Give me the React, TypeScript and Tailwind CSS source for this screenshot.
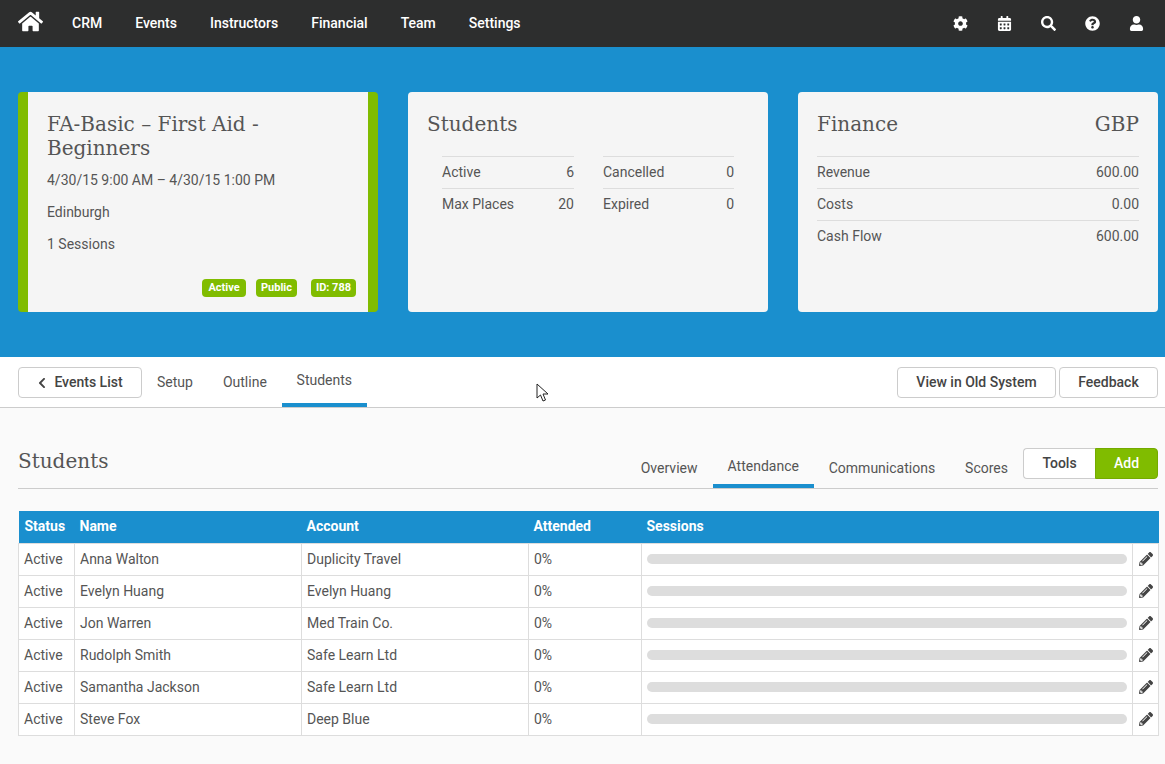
import { FaHome, FaCog, FaCalendarAlt, FaSearch, FaQuestionCircle, FaUser, FaChevronLeft, FaPencilAlt } from 'react-icons/fa'

const NAV = ['CRM', 'Events', 'Instructors', 'Financial', 'Team', 'Settings']

const STUDENTS = [
  ['Anna Walton', 'Duplicity Travel'],
  ['Evelyn Huang', 'Evelyn Huang'],
  ['Jon Warren', 'Med Train Co.'],
  ['Rudolph Smith', 'Safe Learn Ltd'],
  ['Samantha Jackson', 'Safe Learn Ltd'],
  ['Steve Fox', 'Deep Blue'],
]

function StatRow({ label, value }: { label: string; value: string }) {
  return (
    <div className="flex justify-between h-8 items-center border-t border-[#dddddd]">
      <span>{label}</span>
      <span>{value}</span>
    </div>
  )
}

function Badge({ children, className }: { children: string; className: string }) {
  return (
    <span className={`h-[18px] flex items-center justify-center rounded-sm bg-[#80bc00] text-white text-[11px] font-bold ${className}`}>
      {children}
    </span>
  )
}

export default function App() {
  return (
    <div className="min-h-screen bg-[#fafafa] text-[14px] text-[#555555] font-['Roboto',sans-serif] relative">
      {/* Top nav */}
      <header className="h-[47px] bg-[#2d2e2e] flex items-center text-white pl-[18px]">
        <FaHome className="w-[25px] h-[25px] mr-[29px] -mt-1" />
        <nav className="flex gap-[33px] font-medium">
          {NAV.map((n) => (
            <span key={n}>{n}</span>
          ))}
        </nav>
        <div className="ml-auto flex items-center text-[14px]">
          {[FaCog, FaCalendarAlt, FaSearch, FaQuestionCircle, FaUser].map((Icon, i) => (
            <span key={i} className="w-11 flex justify-center">
              <Icon className="w-[15px] h-[15px]" />
            </span>
          ))}
          <span className="w-[7px]" />
        </div>
      </header>

      {/* Summary cards */}
      <section className="h-[310px] bg-[#1a8fce] pt-[45px] pl-[18px] pr-[7px] grid grid-cols-[360px_360px_360px] gap-[30px]">
        <div className="h-[220px] bg-[#f5f5f5] rounded border-x-10 border-[#80bc00] pl-[19px] pr-[12px] pt-5 relative">
          <h2 className="font-['DejaVu_Serif',serif] font-extralight text-[20px] leading-6 text-[#555555]">
            FA-Basic – First Aid - Beginners
          </h2>
          <p className="mt-[10px] leading-5">4/30/15 9:00 AM – 4/30/15 1:00 PM</p>
          <p className="mt-3 leading-5">Edinburgh</p>
          <p className="mt-3 leading-5">1 Sessions</p>
          <div className="absolute right-3 bottom-[15px] flex">
            <Badge className="w-11 mr-[10px]">Active</Badge>
            <Badge className="w-[41px] mr-[14px]">Public</Badge>
            <Badge className="w-[45px]">ID: 788</Badge>
          </div>
        </div>

        <div className="h-[220px] bg-[#f5f5f5] rounded px-[19px] pt-5">
          <h2 className="font-['DejaVu_Serif',serif] text-[20px] leading-6">Students</h2>
          <div className="mt-5 ml-[15px] mr-[15px] flex gap-[29px]">
            <div className="w-[132px]">
              <StatRow label="Active" value="6" />
              <StatRow label="Max Places" value="20" />
            </div>
            <div className="w-[131px]">
              <StatRow label="Cancelled" value="0" />
              <StatRow label="Expired" value="0" />
            </div>
          </div>
        </div>

        <div className="h-[220px] bg-[#f5f5f5] rounded px-[19px] pt-5">
          <h2 className="font-['DejaVu_Serif',serif] text-[20px] leading-6 flex justify-between">
            <span>Finance</span>
            <span>GBP</span>
          </h2>
          <div className="mt-5">
            <StatRow label="Revenue" value="600.00" />
            <StatRow label="Costs" value="0.00" />
            <StatRow label="Cash Flow" value="600.00" />
          </div>
        </div>
      </section>

      {/* Sub nav */}
      <div className="h-[51px] bg-white border-b border-[#cccccc] flex pl-[18px] pr-[7px]">
        <button className="mt-[10px] h-[31px] w-[124px] border border-[#cccccc] rounded flex items-center justify-center gap-[7px] font-medium text-[#444444]">
          <FaChevronLeft className="w-[10px] h-[12px]" />
          Events List
        </button>
        <a className="ml-[15px] h-[50px] flex items-center">Setup</a>
        <a className="ml-[30px] h-[50px] flex items-center">Outline</a>
        <a className="ml-[15px] w-[85px] h-[50px] flex items-center justify-center border-b-4 border-[#1a8fce]">Students</a>
        <button className="ml-auto mt-[10px] h-[31px] w-[159px] border border-[#cccccc] rounded font-medium text-[#444444]">
          View in Old System
        </button>
        <button className="ml-[3px] mt-[10px] h-[31px] w-[99px] border border-[#cccccc] rounded font-medium text-[#444444]">
          Feedback
        </button>
      </div>

      {/* Students panel */}
      <main className="pl-[18px] pr-[7px] pt-10">
        <div className="h-[41px] border-b border-[#cccccc] flex">
          <h1 className="font-['DejaVu_Serif',serif] text-[20px] leading-6 pt-[1px]">Students</h1>
          <div className="ml-auto flex">
            <a className="h-10 w-[72px] mr-[0px] flex items-center">Overview</a>
            <a className="h-10 w-[101px] flex items-center justify-center border-b-4 border-[#1a8fce]">Attendance</a>
            <a className="h-10 ml-[15px] flex items-center">Communications</a>
            <a className="h-10 ml-[30px] flex items-center">Scores</a>
            <div className="ml-[15px] flex h-[31px]">
              <button className="w-[72px] border border-[#cccccc] border-r-0 rounded-l bg-white font-medium text-[#444444]">Tools</button>
              <button className="w-[63px] rounded-r bg-[#80bc00] border border-[#74aa00] text-white font-medium">Add</button>
            </div>
          </div>
        </div>

        <table className="mt-[22px] w-[1140px] table-fixed border-collapse">
          <colgroup>
            <col className="w-[56px]" />
            <col className="w-[227px]" />
            <col className="w-[227px]" />
            <col className="w-[113px]" />
            <col className="w-[491px]" />
            <col className="w-[26px]" />
          </colgroup>
          <thead>
            <tr className="h-8 bg-[#1a8fce] text-white text-left font-bold">
              <th className="pl-[6px] font-bold">Status</th>
              <th className="pl-[5px] font-bold">Name</th>
              <th className="pl-[5px] font-bold">Account</th>
              <th className="pl-[5px] font-bold">Attended</th>
              <th className="pl-[5px] font-bold">Sessions</th>
              <th />
            </tr>
          </thead>
          <tbody className="bg-white">
            {STUDENTS.map(([name, account]) => (
              <tr key={name} className="h-8">
                <td className="border border-[#dddddd] pl-[5px]">Active</td>
                <td className="border border-[#dddddd] pl-[5px]">{name}</td>
                <td className="border border-[#dddddd] pl-[5px]">{account}</td>
                <td className="border border-[#dddddd] pl-[5px]">0%</td>
                <td className="border border-[#dddddd] px-[5px]">
                  <div className="h-[10px] rounded-full bg-[#dddddd]" />
                </td>
                <td className="border border-[#dddddd]">
                  <FaPencilAlt className="w-[14px] h-[14px] mx-auto text-[#444444]" />
                </td>
              </tr>
            ))}
          </tbody>
        </table>
      </main>

      {/* Mouse pointer captured in the screenshot */}
      <svg className="absolute left-[536px] top-[383px]" width="14" height="20" viewBox="0 0 14 20">
        <path d="M1 1 L1 15 L4.5 12 L7 18 L9.5 17 L7 11 L12 11 Z" fill="#fff" stroke="#222" strokeWidth="1" />
      </svg>
    </div>
  )
}
